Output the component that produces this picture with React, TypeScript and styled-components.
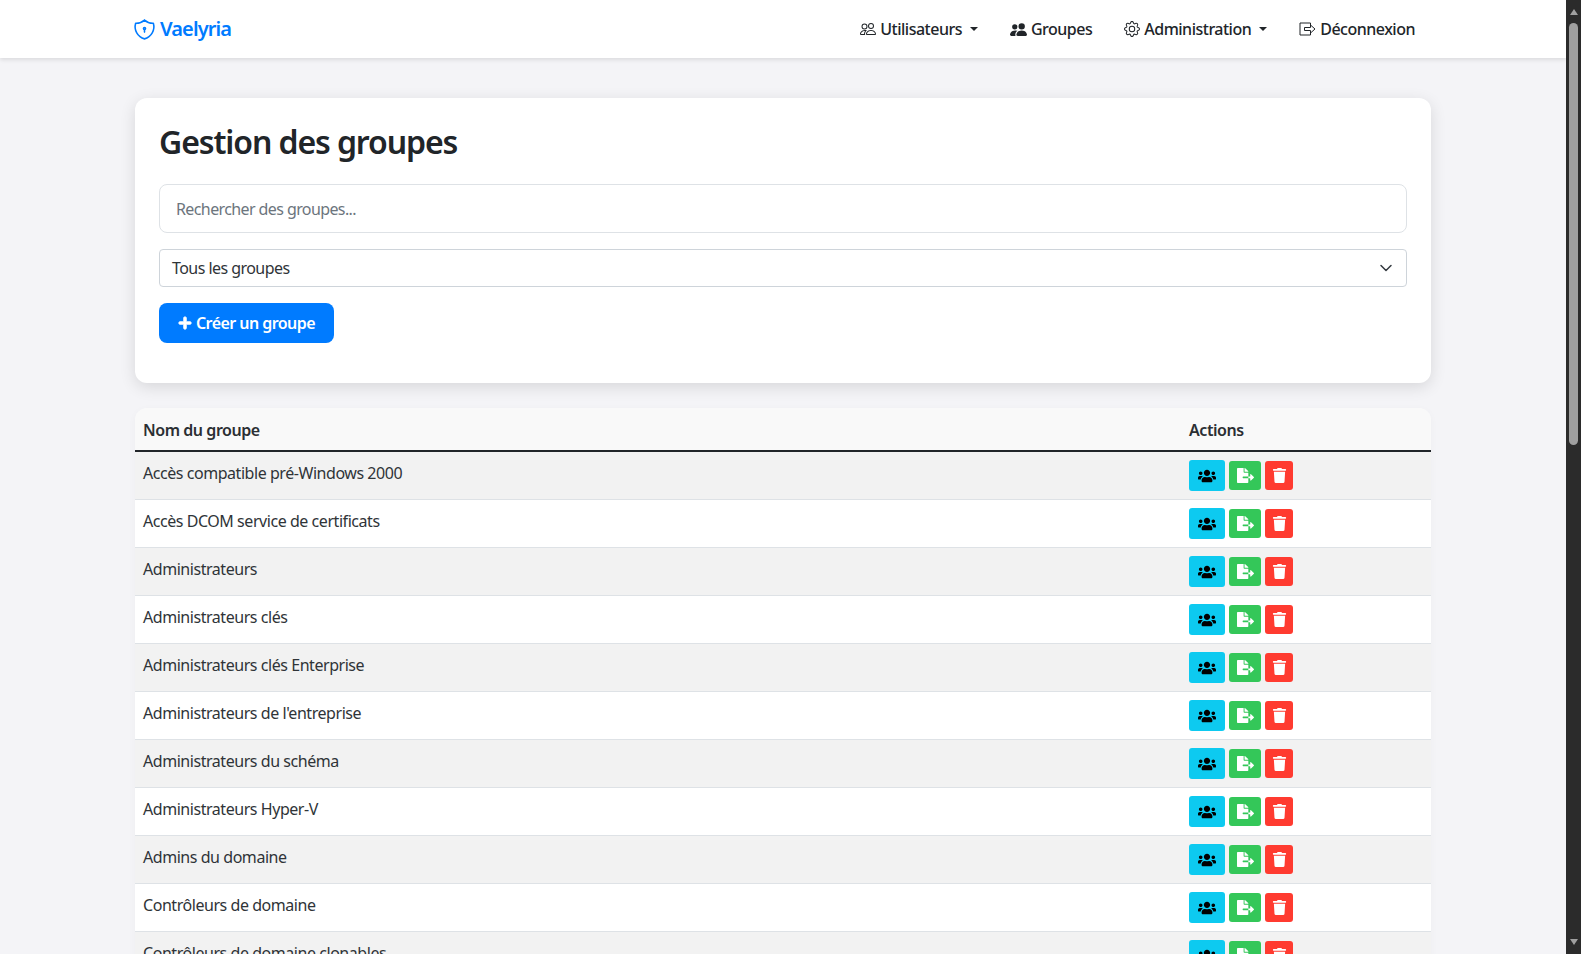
import styled, { createGlobalStyle } from "styled-components";
import { BsGear, BsPeople, BsPeopleFill } from "react-icons/bs";
import { FaFileExport, FaPlus, FaTrash, FaUsers } from "react-icons/fa";
import { TbShieldLock } from "react-icons/tb";

const GlobalStyle = createGlobalStyle`
  body {
    margin: 0;
    padding-right: 15px;
    background: #f4f4f7;
    color: #212529;
    font-family: "Noto Sans", "Open Sans", sans-serif;
    font-size: 16px;
    line-height: 24px;
  }
  * {
    box-sizing: border-box;
  }
`;

const Navbar = styled.nav`
  height: 58px;
  background: #fff;
  box-shadow: 0 2px 4px rgba(0, 0, 0, 0.1);
`;

const NavInner = styled.div`
  width: 1320px;
  height: 100%;
  margin: 0 auto;
  padding: 0 12px;
  display: flex;
  align-items: center;
  justify-content: space-between;
`;

const Brand = styled.a`
  display: flex;
  align-items: center;
  gap: 3px;
  color: #007bff;
  font-size: 20px;
  font-weight: 600;
  letter-spacing: -0.9px;
`;

const BrandIcon = styled(TbShieldLock)`
  margin-left: -3px;
`;

const NavLinks = styled.div`
  display: flex;
  align-items: center;
  padding-right: 16px;
  gap: 32px;
`;

const NavLink = styled.a<{ $caret?: boolean }>`
  display: flex;
  align-items: center;
  gap: 4px;
  color: #212529;
  font-size: 16px;
  font-weight: 500;
  letter-spacing: -0.5px;

  &::after {
    content: "";
    display: ${(p) => (p.$caret ? "block" : "none")};
    margin-left: 4px;
    border-top: 4.8px solid #212529;
    border-left: 4.8px solid transparent;
    border-right: 4.8px solid transparent;
  }
`;

const Main = styled.main`
  width: 1320px;
  margin: 0 auto;
  padding: 40px 12px 48px;
`;

const Card = styled.section`
  background: #fff;
  border-radius: 12px;
  box-shadow: 0 4px 16px rgba(0, 0, 0, 0.12);
  padding: 24px 24px 40px;
  margin-bottom: 25px;
  display: flex;
  flex-direction: column;
  align-items: flex-start;
`;

const Title = styled.h1`
  margin: 0 0 22px;
  font-size: 32px;
  line-height: 40px;
  font-weight: 600;
  letter-spacing: -1.1px;
  color: #212529;
`;

const SearchInput = styled.input`
  width: 100%;
  height: 49px;
  margin-bottom: 16px;
  padding: 0 16px;
  border: 1px solid #dee2e6;
  border-radius: 8px;
  font: inherit;
  letter-spacing: -0.6px;
  color: #212529;
  outline: none;

  &::placeholder {
    color: #6c757d;
    opacity: 1;
  }
`;

const SelectBox = styled.div`
  width: 100%;
  height: 38px;
  margin-bottom: 16px;
  padding: 0 12px;
  border: 1px solid #ced4da;
  border-radius: 4px;
  display: flex;
  align-items: center;
  justify-content: space-between;
  letter-spacing: -0.55px;
  color: #2f3438;
`;

const CreateButton = styled.button`
  height: 40px;
  width: 175px;
  border: 0;
  border-radius: 8px;
  background: #007bff;
  color: #fff;
  font: inherit;
  font-weight: 600;
  letter-spacing: -0.55px;
  display: flex;
  align-items: center;
  justify-content: center;
  gap: 4px;
`;

const Table = styled.table`
  width: 100%;
  border-collapse: separate;
  border-spacing: 0;
  table-layout: fixed;
  border-radius: 12px 12px 0 0;
  overflow: hidden;
  box-shadow: 0 2px 8px rgba(0, 0, 0, 0.03);
`;

const HeadCell = styled.th<{ $w?: number }>`
  background: #f9f9f9;
  height: 44px;
  padding: 9px 8px 7px;
  text-align: left;
  font-weight: 600;
  letter-spacing: -0.45px;
  color: #2b2f33;
  border-bottom: 2px solid #212529;
  width: ${(p) => (p.$w ? `${p.$w}px` : "auto")};
`;

const Row = styled.tr<{ $odd: boolean }>`
  background: ${(p) => (p.$odd ? "#f2f2f2" : "#fff")};
`;

const NameCell = styled.td`
  padding: 9px 8px 8px;
  height: 48px;
  vertical-align: top;
  border-bottom: 1px solid #dee2e6;
  letter-spacing: -0.45px;
  color: #2f3438;
`;

const ActionsCell = styled.td`
  padding: 8px;
  height: 48px;
  vertical-align: top;
  border-bottom: 1px solid #dee2e6;
`;

const Actions = styled.div`
  display: flex;
  align-items: center;
  gap: 4px;
`;

const ActionButton = styled.button<{ $bg: string; $fg: string; $w: number; $h: number }>`
  width: ${(p) => p.$w}px;
  height: ${(p) => p.$h}px;
  padding: 0;
  border: 0;
  border-radius: 3px;
  background: ${(p) => p.$bg};
  color: ${(p) => p.$fg};
  display: flex;
  align-items: center;
  justify-content: center;
`;

// the browser's own scrollbar is hidden in the photo, so it is drawn over the right edge
const ScrollRail = styled.div`
  position: fixed;
  top: 0;
  right: 0;
  bottom: 0;
  width: 15px;
  background: #2b2b2b;
  display: flex;
  flex-direction: column;
  align-items: center;
  padding: 9px 0;
`;

const ArrowUp = styled.div`
  border-bottom: 6px solid #9f9f9f;
  border-left: 4.5px solid transparent;
  border-right: 4.5px solid transparent;
`;

const ArrowDown = styled.div`
  margin-top: auto;
  border-top: 6px solid #9f9f9f;
  border-left: 4.5px solid transparent;
  border-right: 4.5px solid transparent;
`;

const ScrollThumb = styled.div`
  width: 9px;
  height: 422px;
  margin-top: 8px;
  border-radius: 5px;
  background: #9f9f9f;
`;

const groups = [
  "Accès compatible pré-Windows 2000",
  "Accès DCOM service de certificats",
  "Administrateurs",
  "Administrateurs clés",
  "Administrateurs clés Enterprise",
  "Administrateurs de l'entreprise",
  "Administrateurs du schéma",
  "Administrateurs Hyper-V",
  "Admins du domaine",
  "Contrôleurs de domaine",
  "Contrôleurs de domaine clonables",
];

export default function App() {
  return (
    <>
      <GlobalStyle />
      <Navbar>
        <NavInner>
          <Brand>
            <BrandIcon size={25} strokeWidth={1.5} />
            Vaelyria
          </Brand>
          <NavLinks>
            <NavLink $caret>
              <BsPeople size={16} />
              Utilisateurs
            </NavLink>
            <NavLink>
              <BsPeopleFill size={17} />
              Groupes
            </NavLink>
            <NavLink $caret>
              <BsGear size={16} />
              Administration
            </NavLink>
            <NavLink>
              <svg width="17" height="16" viewBox="0 0 17 16" fill="none" stroke="#212529" strokeWidth="1" strokeLinejoin="round">
                <path d="M11.5 4V2H1v12h10.5v-2" />
                <path d="M5.5 6.5h6V4l4.5 4-4.5 4V9.5h-6z" />
              </svg>
              Déconnexion
            </NavLink>
          </NavLinks>
        </NavInner>
      </Navbar>
      <Main>
        <Card>
          <Title>Gestion des groupes</Title>
          <SearchInput placeholder="Rechercher des groupes..." />
          <SelectBox>
            Tous les groupes
            <svg width="16" height="16" viewBox="0 0 16 16" fill="none" stroke="#343a40" strokeWidth="1.5" strokeLinecap="round" strokeLinejoin="round">
              <path d="m3 5.5 5 5 5-5" />
            </svg>
          </SelectBox>
          <CreateButton>
            <FaPlus size={14} stroke="currentColor" strokeWidth={30} />
            Créer un groupe
          </CreateButton>
        </Card>
        <Table>
          <thead>
            <tr>
              <HeadCell>Nom du groupe</HeadCell>
              <HeadCell $w={250}>Actions</HeadCell>
            </tr>
          </thead>
          <tbody>
            {groups.map((name, i) => (
              <Row key={name} $odd={i % 2 === 0}>
                <NameCell>{name}</NameCell>
                <ActionsCell>
                  <Actions>
                    <ActionButton $bg="#0dcaf0" $fg="#000" $w={36} $h={31}>
                      <FaUsers size={18} />
                    </ActionButton>
                    <ActionButton $bg="#34c759" $fg="#fff" $w={32} $h={29}>
                      <FaFileExport size={17} />
                    </ActionButton>
                    <ActionButton $bg="#ff3b30" $fg="#fff" $w={28} $h={29}>
                      <FaTrash size={15} />
                    </ActionButton>
                  </Actions>
                </ActionsCell>
              </Row>
            ))}
          </tbody>
        </Table>
      </Main>
      <ScrollRail>
        <ArrowUp />
        <ScrollThumb />
        <ArrowDown />
      </ScrollRail>
    </>
  );
}
